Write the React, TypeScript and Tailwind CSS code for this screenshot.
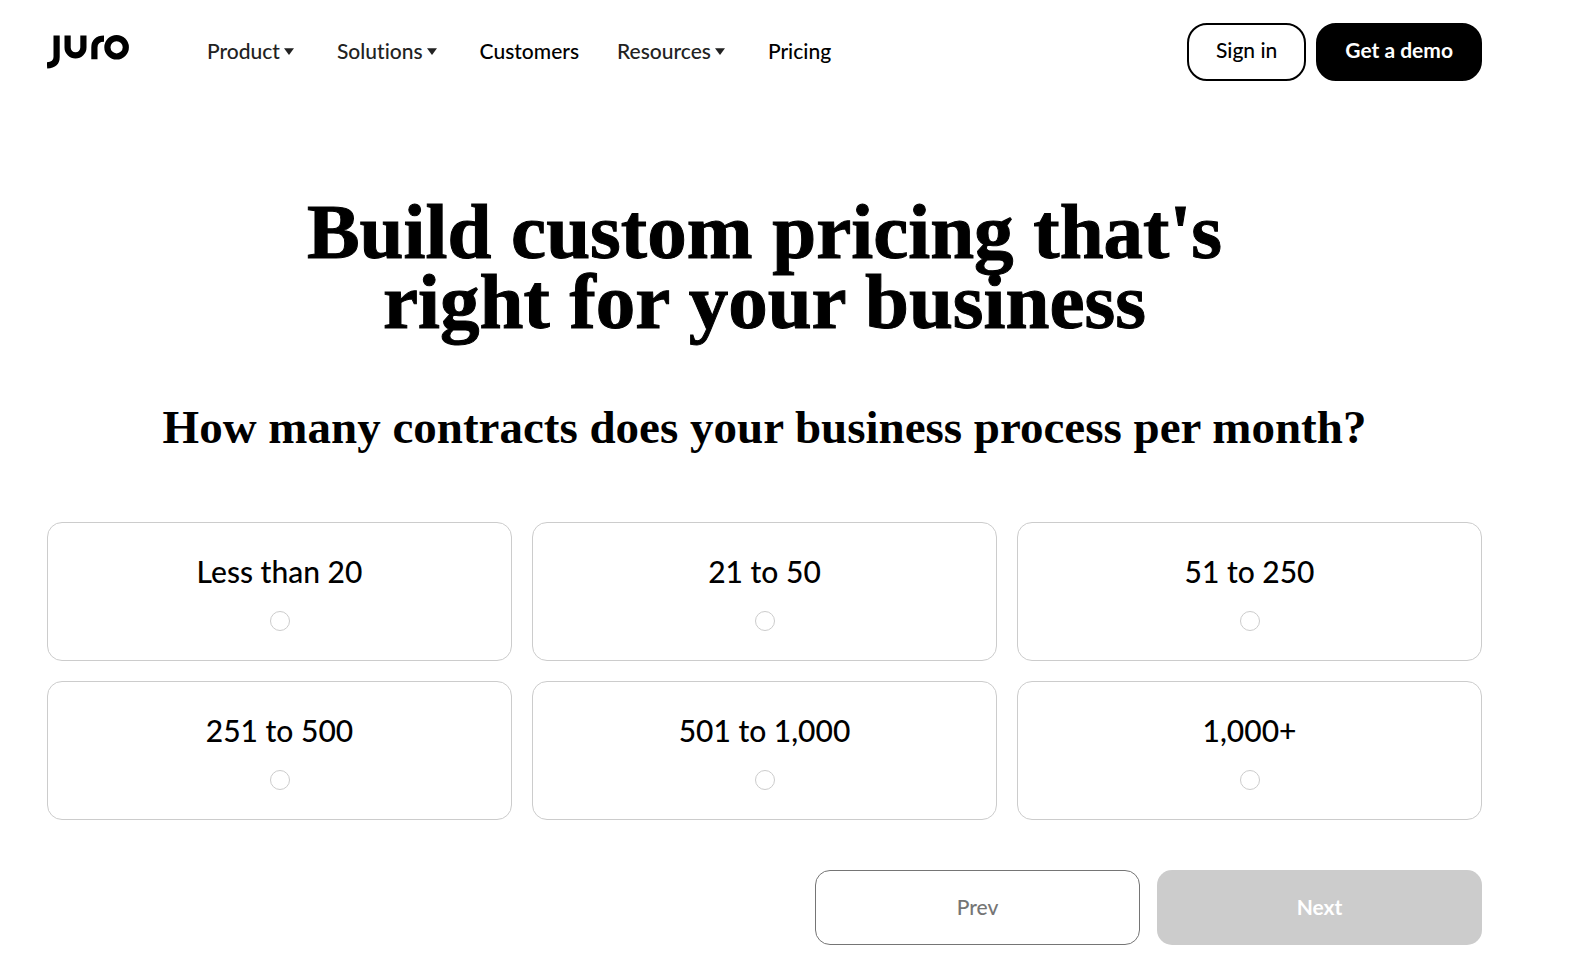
import { useState } from 'react'
import type { ReactNode } from 'react'

interface NavItem {
  label: string
  hasMenu?: boolean
}

const NAV_ITEMS: NavItem[] = [
  { label: 'Product', hasMenu: true },
  { label: 'Solutions', hasMenu: true },
  { label: 'Customers' },
  { label: 'Resources', hasMenu: true },
  { label: 'Pricing' },
]

const OPTIONS = ['Less than 20', '21 to 50', '51 to 250', '251 to 500', '501 to 1,000', '1,000+']

function Logo() {
  return (
    <svg width="83" height="35" viewBox="0 0 83 35" fill="none" stroke="#000" strokeWidth="6.2" aria-hidden="true">
      <path d="M9.6 .4v21.5c0 5.2-3 8-9.6 8.4" />
      <path d="M20.6 .4v12.1a7.9 7.9 0 0 0 15.8 0V.4" />
      <path d="M47.4 24.2V12.4c0-5.6 3.2-8.8 9.6-8.8" />
      <circle cx="69.6" cy="12.3" r="9.2" />
    </svg>
  )
}

function Caret() {
  return (
    <svg width="15" height="10" viewBox="0 0 15 10" fill="currentColor" aria-hidden="true">
      <path d="M0 2.2h10L5 9z" />
    </svg>
  )
}

function NavEntry({ item }: { item: NavItem }) {
  if (!item.hasMenu) {
    return (
      <a href="#" className="text-black">
        {item.label}
      </a>
    )
  }
  return (
    <button type="button" aria-haspopup="true" className="flex items-center gap-1 text-[#222]">
      {item.label}
      <Caret />
    </button>
  )
}

function Header() {
  return (
    <header className="flex items-center justify-between pt-[23px]">
      <div className="flex items-center">
        <a href="#" aria-label="Juro" className="mr-[77px]">
          <Logo />
        </a>
        <nav className="flex items-center gap-[38px] pb-[2px] text-[21px] leading-6 font-medium">
          {NAV_ITEMS.map((item) => (
            <NavEntry key={item.label} item={item} />
          ))}
        </nav>
      </div>
      <div className="flex gap-[10px] text-[21px] leading-6">
        <a href="#" className="rounded-[20px] border-2 border-black px-[27px] pt-[13px] pb-[17px] font-medium">
          Sign in
        </a>
        <a
          href="#"
          className="rounded-[20px] border-2 border-black bg-black px-[27px] pt-[13px] pb-[17px] font-bold text-white"
        >
          Get a demo
        </a>
      </div>
    </header>
  )
}

interface OptionCardProps {
  checked: boolean
  onSelect: () => void
  children: ReactNode
}

function OptionCard({ checked, onSelect, children }: OptionCardProps) {
  return (
    <label className="flex cursor-pointer flex-col items-center gap-[21px] rounded-[15px] border border-[#ccc] pt-[30px] pb-[29px] text-[30px] leading-[37px] font-medium">
      {children}
      <input
        type="radio"
        name="contracts"
        checked={checked}
        onChange={onSelect}
        className="size-5 appearance-none rounded-full border border-[#ccc] checked:bg-black"
      />
    </label>
  )
}

export default function App() {
  const [selected, setSelected] = useState<string | null>(null)

  return (
    <div className="bg-white pr-[87px] pb-[10px] pl-[47px] font-[Lato,sans-serif] text-black [font-variant-ligatures:none]">
      <Header />
      <main className="pt-[116px]">
        <h1 className="text-center font-['Liberation_Serif',serif] text-[79px] leading-[70px] font-bold [-webkit-text-stroke:1px_black]">
          Build custom pricing that's
          <br />
          right for your business
        </h1>
        <form>
          <h2
            id="contracts-question"
            className="pt-[60px] pb-[65px] text-center font-['Liberation_Serif',serif] text-[47px] leading-[60px] font-bold"
          >
            How many contracts does your business process per month?
          </h2>
          <div role="radiogroup" aria-labelledby="contracts-question" className="grid grid-cols-3 gap-5">
            {OPTIONS.map((option) => (
              <OptionCard key={option} checked={selected === option} onSelect={() => setSelected(option)}>
                {option}
              </OptionCard>
            ))}
          </div>
          <div className="flex justify-end gap-[17px] pt-[50px] text-[21px] leading-6">
            <button
              type="button"
              className="h-[75px] w-[325px] rounded-[15px] border border-[#757575] pb-[2px] font-medium text-[#757575]"
            >
              Prev
            </button>
            <button
              type="button"
              disabled={selected === null}
              className="h-[75px] w-[325px] rounded-[15px] bg-black pb-[2px] font-bold text-white disabled:bg-[#ccc]"
            >
              Next
            </button>
          </div>
        </form>
      </main>
    </div>
  )
}
